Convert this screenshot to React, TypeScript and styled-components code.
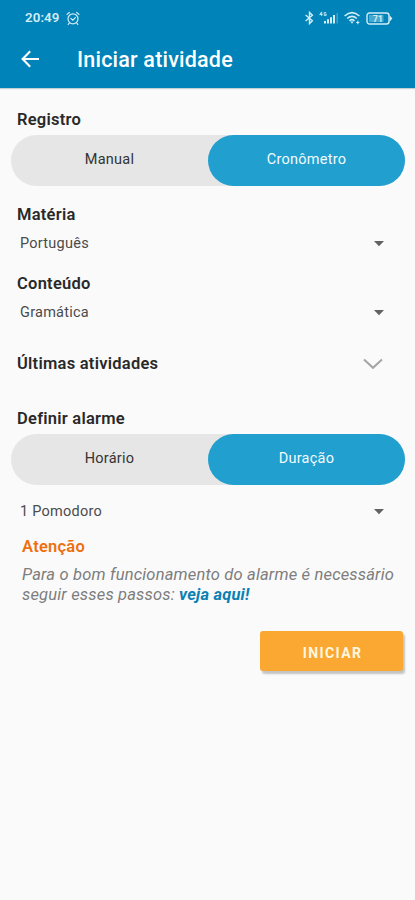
import React from 'react';
import styled, { createGlobalStyle } from 'styled-components';

const GlobalStyle = createGlobalStyle`
  * { box-sizing: border-box; }
  body { margin: 0; background: #fafafa; font-family: Roboto, "Liberation Sans", sans-serif; }
  button { font-family: inherit; border: 0; padding: 0; background: none; }
`;

const Screen = styled.div`
  width: 415px;
  height: 900px;
  background: #fafafa;
  overflow: hidden;
`;

const Header = styled.header`
  height: 88px;
  background: #0083b8;
  color: #fff;
  box-shadow: 0 1px 1px rgba(0, 60, 80, 0.22);
`;

const StatusBar = styled.div`
  height: 36px;
  padding: 0 22px 0 25px;
  display: flex;
  align-items: center;
  justify-content: space-between;
  color: #d3edf7;
`;

const StatusGroup = styled.div<{ $gap: number }>`
  display: flex;
  align-items: center;
  gap: ${(p) => p.$gap}px;
  svg { display: block; }
`;

const Clock = styled.span`
  font-size: 13.3px;
  line-height: 16px;
  font-weight: 600;
  letter-spacing: 0.1px;
`;

const Toolbar = styled.div`
  height: 48px;
  padding-left: 21px;
  display: flex;
  align-items: center;
  gap: 37px;
`;

const BackButton = styled.button`
  display: flex;
  width: 19px;
  margin-top: -2px;
  color: #fff;
`;

const Title = styled.h1`
  margin: 0;
  font-size: 21.5px;
  line-height: 28px;
  font-weight: 500;
  letter-spacing: 0.2px;
  white-space: nowrap;
`;

const Form = styled.main`
  padding: 20px 11px 0;
  display: flex;
  flex-direction: column;
`;

const Label = styled.h2<{ $top?: number }>`
  margin: ${(p) => p.$top ?? 0}px 0 0 6px;
  font-size: 16.5px;
  line-height: 24px;
  font-weight: 600;
  letter-spacing: 0.25px;
  color: #292929;
`;

const Segmented = styled.div<{ $top: number }>`
  margin-top: ${(p) => p.$top}px;
  width: 394px;
  height: 51px;
  border-radius: 26px;
  background: #e6e6e6;
  display: grid;
  grid-template-columns: 1fr 1fr;
`;

const Segment = styled.button<{ $active?: boolean }>`
  border-radius: 26px;
  padding-bottom: 3px;
  font-size: 14.5px;
  letter-spacing: 0.25px;
  color: ${(p) => (p.$active ? '#f2fbff' : '#333')};
  background: ${(p) => (p.$active ? '#219fce' : 'transparent')};
`;

const SelectRow = styled.div<{ $top?: number }>`
  margin: ${(p) => p.$top ?? 0}px 19px 0 9px;
  height: 24px;
  display: flex;
  align-items: center;
  justify-content: space-between;
  font-size: 14.5px;
  letter-spacing: 0.25px;
  color: #4b4b4b;
`;

const AccordionRow = styled.div`
  margin: 28px 21px 0 0;
  display: flex;
  align-items: center;
  justify-content: space-between;
`;

const WarningTitle = styled.h3`
  margin: 12px 0 0 11px;
  font-size: 16.5px;
  line-height: 24px;
  font-weight: 600;
  letter-spacing: 0.25px;
  color: #ed700f;
`;

const WarningText = styled.p`
  margin: 6px 0 0 11px;
  font-size: 16.5px;
  line-height: 20px;
  font-style: italic;
  letter-spacing: 0.18px;
  color: #7d7d7d;
  white-space: nowrap;
`;

const InlineLink = styled.a`
  font-weight: 700;
  color: #0c80b2;
`;

const StartButton = styled.button`
  align-self: flex-end;
  margin: 26px 1px 0 0;
  width: 143px;
  height: 40px;
  border-radius: 3px;
  background: #faa831;
  box-shadow: 2px 3px 2px rgba(0, 0, 0, 0.22);
  padding: 3px 0 0 2px;
  color: #fff6df;
  font-size: 14px;
  font-weight: 700;
  letter-spacing: 1.4px;
`;

const AlarmIcon = () => (
  <svg width="14" height="15" viewBox="0 0 14 15" fill="none" stroke="currentColor" strokeWidth="1.2" strokeLinecap="round">
    <circle cx="7" cy="7.8" r="5" />
    <path d="M1 3.4 3.3 1.5M13 3.4 10.7 1.5M3.2 12.2 2.2 13.5M10.8 12.2l1 1.3M4.8 7.4l2 1.8 2.6-2.6" />
  </svg>
);

const BluetoothIcon = () => (
  <svg width="9" height="14" viewBox="0 0 9 14" fill="none" stroke="currentColor" strokeWidth="1.4">
    <path d="M.6 4 7.4 9.8 4.5 12.6V1.4L7.4 4.2.6 10" />
  </svg>
);

const SignalIcon = () => (
  <svg width="20" height="14" viewBox="0 0 20 14" fill="currentColor">
    <path d="M2.7.9v4M2.7.9.7 3.6H3.5M7.2 1.6H5.2v2.8h2V3H6.2" fill="none" stroke="currentColor" strokeWidth=".9" />
    <path d="M5 10h2v2.5H5zM8 8.2h2v4.3H8zM11 6.2h2v6.3h-2zM14 4h2v8.5h-2z" />
    <path d="M17.5 2h1.5v10.5h-1.5z" opacity=".3" />
  </svg>
);

const WifiIcon = () => (
  <svg width="17" height="14" viewBox="0 0 17 14" fill="none" stroke="currentColor" strokeWidth="1.6">
    <path d="M.6 5Q8 -1.6 15.4 5M3.2 7.5Q8 3.2 12.8 7.5M5.5 9.8Q8 7.6 10.5 9.8" />
    <path d="m6.3 10.6 1.7 2.2 1.7-2.2z" fill="currentColor" stroke="none" />
    <path d="M13.8 9.8v3.4M12.2 11.5h3.2" strokeWidth="1.1" />
  </svg>
);

const BatteryIcon = () => (
  <svg width="27" height="13" viewBox="0 0 27 13" fill="none" stroke="currentColor" strokeWidth="1.4">
    <rect x="1" y="1" width="22" height="11" rx="2.5" />
    <path d="M23.6 3.2 26.4 6.5 23.6 9.8z" fill="currentColor" stroke="none" />
    <rect x="3" y="3" width="14.5" height="7" fill="currentColor" opacity=".35" stroke="none" />
    <text x="12" y="9.7" textAnchor="middle" fontFamily="Roboto, sans-serif" fontSize="8.5" fontWeight="700" fill="currentColor" stroke="none">71</text>
  </svg>
);

const BackArrow = () => (
  <svg width="19" height="18" viewBox="0 0 19 18" fill="none" stroke="currentColor" strokeWidth="2.1">
    <path d="M18 9H2.2M9.2 1.2 1.6 9l7.6 7.8" />
  </svg>
);

const Caret = () => (
  <svg width="12" height="7" viewBox="0 0 12 7" fill="#626262">
    <path d="M1 1h10L6 6.2z" />
  </svg>
);

const Chevron = () => (
  <svg width="20" height="12" viewBox="0 0 20 12" fill="none" stroke="#a5a5a5" strokeWidth="2">
    <path d="M1 1.4 10 9.8l9-8.4" />
  </svg>
);

type Choice = { options: [string, string]; active: number; top: number };

const Choices = ({ options, active, top }: Choice) => (
  <Segmented $top={top}>
    {options.map((text, i) => (
      <Segment key={text} $active={i === active}>{text}</Segment>
    ))}
  </Segmented>
);

const Select = ({ value, top }: { value: string; top?: number }) => (
  <SelectRow $top={top}>
    <span>{value}</span>
    <Caret />
  </SelectRow>
);

export default function App() {
  return (
    <Screen>
      <GlobalStyle />
      <Header>
        <StatusBar>
          <StatusGroup $gap={6}>
            <Clock>20:49</Clock>
            <AlarmIcon />
          </StatusGroup>
          <StatusGroup $gap={5}>
            <BluetoothIcon />
            <SignalIcon />
            <WifiIcon />
            <BatteryIcon />
          </StatusGroup>
        </StatusBar>
        <Toolbar>
          <BackButton aria-label="Voltar"><BackArrow /></BackButton>
          <Title>Iniciar atividade</Title>
        </Toolbar>
      </Header>
      <Form>
        <Label>Registro</Label>
        <Choices options={['Manual', 'Cronômetro']} active={1} top={3} />
        <Label $top={17}>Matéria</Label>
        <Select value="Português" top={4} />
        <Label $top={17}>Conteúdo</Label>
        <Select value="Gramática" top={4} />
        <AccordionRow>
          <Label>Últimas atividades</Label>
          <Chevron />
        </AccordionRow>
        <Label $top={31}>Definir alarme</Label>
        <Choices options={['Horário', 'Duração']} active={1} top={3} />
        <Select value="1 Pomodoro" top={14} />
        <WarningTitle>Atenção</WarningTitle>
        <WarningText>
          Para o bom funcionamento do alarme é necessário<br />
          seguir esses passos: <InlineLink>veja aqui!</InlineLink>
        </WarningText>
        <StartButton>INICIAR</StartButton>
      </Form>
    </Screen>
  );
}
